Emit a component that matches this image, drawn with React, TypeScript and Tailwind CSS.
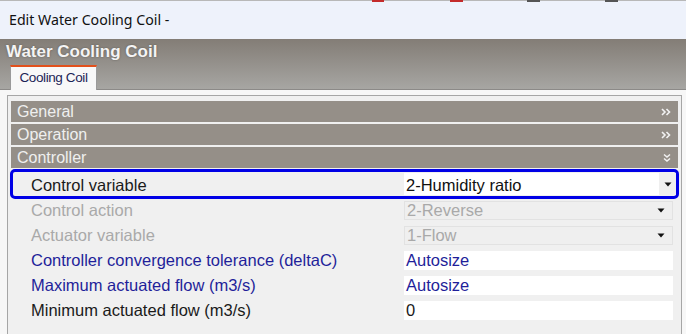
import React from "react";

const Arrow = () => (
  <svg width="8" height="5" viewBox="0 0 8 5" className="block">
    <path d="M0.5 0.5 L7.5 0.5 L4 4.5 Z" fill="#111" />
  </svg>
);

const ChevRight = () => (
  <svg width="10" height="8" viewBox="0 0 10 8" className="block">
    <path d="M1 1 L4 4 L1 7 M5.5 1 L8.5 4 L5.5 7" stroke="#f2f2f2" strokeWidth="1.6" fill="none" />
  </svg>
);

const ChevDown = () => (
  <svg width="8" height="10" viewBox="0 0 8 10" className="block">
    <path d="M1 1.5 L4 4 L7 1.5 M1 5.5 L4 8 L7 5.5" stroke="#f2f2f2" strokeWidth="1.5" fill="none" />
  </svg>
);

function SectionBar({ label, down }: { label: string; down?: boolean }) {
  return (
    <div className="h-[23px] bg-[#958f88] flex items-center justify-between pl-[6px] pr-[7px] border-b-2 border-[#f0f0f0]">
      <span className="text-[#efefef] text-[16px] leading-none">{label}</span>
      {down ? <ChevDown /> : <ChevRight />}
    </div>
  );
}

function Row({
  label,
  value,
  kind,
}: {
  label: string;
  value: string;
  kind: "disabled" | "blue" | "normal";
}) {
  const color =
    kind === "disabled" ? "text-[#a9a9a9]" : kind === "blue" ? "text-[#1f1f9a]" : "text-[#1a1a1a]";
  return (
    <div className="h-[25px] flex items-start">
      <div className={`w-[393px] pl-[20px] h-[19px] flex items-center text-[16.5px] ${color}`}>{label}</div>
      <div
        className={`w-[269px] h-[19px] flex items-center justify-between pl-[2px] pr-[7px] text-[16.5px] ${color} ${
          kind === "disabled" ? "bg-[#efefef] border border-[#e2e2e2]" : "bg-white"
        }`}
      >
        <span>{value}</span>
        {kind === "disabled" ? <Arrow /> : null}
      </div>
    </div>
  );
}

export default function App() {
  return (
    <div
      className="w-[686px] h-[334px] overflow-hidden bg-[#f7f7f7]"
      style={{ fontFamily: '"Liberation Sans", Arial, sans-serif' }}
    >
      {/* Title bar */}
      <div className="relative h-[39px] bg-[#eef2fb] border-t border-[#b8b8b8] flex items-center pl-[9px]">
        <div className="absolute top-[-1px] left-[372px] w-[12px] h-[2px] bg-[#c42b2b]" />
        <div className="absolute top-[-1px] left-[450px] w-[13px] h-[2px] bg-[#c42b2b]" />
        <div className="absolute top-[-1px] left-[527px] w-[13px] h-[2px] bg-[#555]" />
        <div className="absolute top-[-1px] left-[605px] w-[13px] h-[2px] bg-[#555]" />
        <span
          className="text-[14.2px] text-[#111] pb-[1px]"
          style={{ fontFamily: '"Noto Sans", "Open Sans", sans-serif' }}
        >
          Edit Water Cooling Coil -
        </span>
      </div>

      {/* Header */}
      <div className="h-[51px] bg-gradient-to-b from-[#837d76] to-[#a7a6a3] border-b border-[#8c8a88] flex flex-col">
        <div
          className="pl-[6px] pt-[3px] h-[27px] text-[17px] font-bold text-[#f4f4f4] leading-[19px]"
          style={{ textShadow: "0 0 2px rgba(60,55,50,0.6)" }}
        >
          Water Cooling Coil
        </div>
        <div className="flex pl-[10px] h-[24px]">
          <div className="w-[87px] h-[25px] bg-[#f8f8f8] border-t-2 border-[#e2501c] border-x border-x-[#9a9a9a] flex items-center justify-center text-[13.5px] text-[#1c2456] tracking-[-0.4px]">
            Cooling Coil
          </div>
        </div>
      </div>

      {/* Content */}
      <div className="pl-[7px] pr-[4px] pt-[5px]">
        <div className="border border-[#a6a6a6] bg-[#f0f0f0] h-[260px] pt-[5px] pl-[3px] pr-[3px]">
          <SectionBar label="General" />
          <SectionBar label="Operation" />
          <SectionBar label="Controller" down />

          <div className="-ml-[1px] -mr-[1px] -mt-[1px] h-[30px] border-[3px] border-[#0000e6] rounded-[5px] flex items-center">
            <div className="w-[391px] pl-[18px] pt-[2px] text-[16.5px] text-[#1a1a1a]">Control variable</div>
            <div className="flex-1 h-[22px] bg-white flex items-center justify-between pl-[2px] pr-0 text-[16.5px] text-[#111]">
              <span className="pt-[2px]">2-Humidity ratio</span>
              <div className="w-[17px] h-[22px] bg-[#efefef] flex items-center justify-center">
                <Arrow />
              </div>
            </div>
          </div>

          <div className="pt-[2px]">
            <Row label="Control action" value="2-Reverse" kind="disabled" />
            <Row label="Actuator variable" value="1-Flow" kind="disabled" />
            <Row label="Controller convergence tolerance (deltaC)" value="Autosize" kind="blue" />
            <Row label="Maximum actuated flow (m3/s)" value="Autosize" kind="blue" />
            <Row label="Minimum actuated flow (m3/s)" value="0" kind="normal" />
          </div>
        </div>
      </div>
    </div>
  );
}
